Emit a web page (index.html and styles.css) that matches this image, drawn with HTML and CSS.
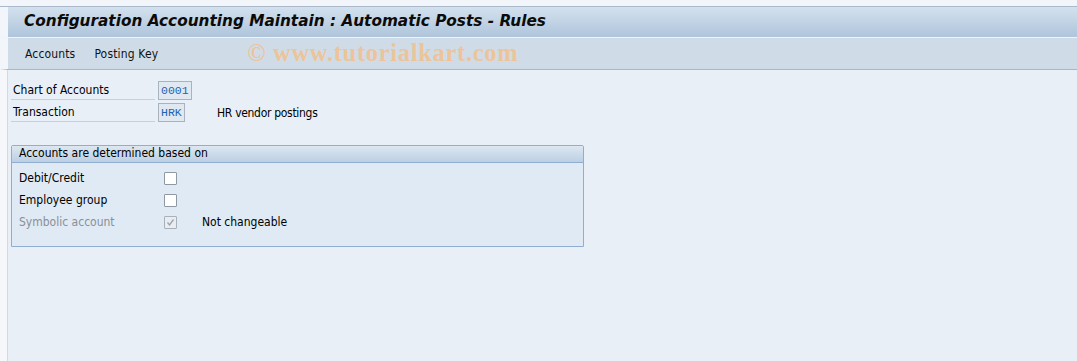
FILE: index.html
```html
<!DOCTYPE html>
<html>
<head>
<meta charset="utf-8">
<link rel="stylesheet" href="styles.css">
</head>
<body>
<div class="topstrip"></div>
<div class="titlebar"><h1 class="title">Configuration Accounting Maintain : Automatic Posts - Rules</h1></div>
<div class="menubar">
  <span class="menu-item">Accounts</span>
  <span class="menu-item">Posting Key</span>
  <span class="watermark">© www.tutorialkart.com</span>
</div>
<div class="main">
  <div class="gutter"></div>
  <div class="content">
    <div class="fields">
      <div class="row">
        <span class="label">Chart of Accounts</span>
        <span class="input w4">0001</span>
      </div>
      <div class="row">
        <span class="label">Transaction</span>
        <span class="input w3">HRK</span>
        <span class="desc">HR vendor postings</span>
      </div>
    </div>
    <div class="group">
      <div class="group-head">Accounts are determined based on</div>
      <div class="group-body">
        <div class="crow"><span class="clabel">Debit/Credit</span><span class="cbox"></span></div>
        <div class="crow"><span class="clabel">Employee group</span><span class="cbox"></span></div>
        <div class="crow"><span class="clabel disabled">Symbolic account</span><span class="cbox checked"><svg width="11" height="11" viewBox="0 0 11 11"><path d="M2.5 5.5 L4.5 8 L8.5 2.5" fill="none" stroke="#9aa3ad" stroke-width="1.3"/></svg></span><span class="cnote">Not changeable</span></div>
      </div>
    </div>
  </div>
</div>
</body>
</html>
```
FILE: styles.css
```css
html, body { margin: 0; padding: 0; }
body {
  width: 1077px;
  height: 361px;
  overflow: hidden;
  background: #e8eff7;
  font-family: Tahoma, "DejaVu Sans Condensed", "Liberation Sans", sans-serif;
  font-size: 12px;
  color: #000;
  display: flex;
  flex-direction: column;
}
.topstrip {
  height: 6px;
  background: #f2f5f9;
  border-bottom: 1px solid #a9b8ca;
}
.titlebar {
  height: 30px;
  background: linear-gradient(#d3e1ee, #afc5db);
  border-left: 8px solid #f2f5f9;
  border-bottom: 1px solid #eef3f8;
  display: flex;
  align-items: center;
  padding-left: 16px;
}
.title {
  margin: 0;
  font-family: "DejaVu Sans", Verdana, sans-serif;
  font-size: 15.3px;
  font-weight: bold;
  font-style: italic;
  color: #0b0b0b;
  position: relative;
  top: -1px;
}
.menubar {
  height: 31px;
  background: #cfdce7;
  border-left: 8px solid #f2f5f9;
  border-bottom: 1px solid #a8b6c6;
  display: flex;
  align-items: center;
  padding-left: 17px;
  gap: 19px;
}
.menu-item { font-size: 12px; color: #111; letter-spacing: 0.15px; }
.watermark {
  margin-left: 70px;
  font-family: "Liberation Serif", "DejaVu Serif", serif;
  font-size: 24.5px;
  letter-spacing: 0.7px;
  font-weight: bold;
  color: #edc49a;
  position: relative;
  top: -1px;
}
.main {
  flex: 1;
  display: flex;
}
.gutter {
  width: 7px;
  background: #f5f7fa;
  border-right: 1px solid #d3dae4;
}
.content {
  padding: 11px 0 0 3px;
}
.fields { display: flex; flex-direction: column; gap: 3px; }
.row {
  display: flex;
  align-items: center;
  height: 19px;
}
.label {
  width: 144px;
  height: 19px;
  line-height: 19px;
  padding-left: 2px;
  border-bottom: 1px solid #c7d1dc;
  box-sizing: border-box;
  margin-right: 3px;
}
.input {
  height: 19px;
  box-sizing: border-box;
  border: 1px solid #a9b3be;
  background: #e0e9f2;
  font-family: "Liberation Mono", "Courier New", monospace;
  font-size: 11.5px;
  color: #1f63b4;
  line-height: 17px;
  padding: 0 2px;
}
.w4 { width: 34px; }
.w3 { width: 27px; }
.desc { margin-left: 32px; letter-spacing: -0.3px; }
.group {
  margin-top: 23px;
  width: 573px;
  height: 102px;
  box-sizing: border-box;
  border: 1px solid #90afd0;
  border-radius: 2px 2px 0 0;
  background: #dfeaf4;
}
.group-head {
  height: 16px;
  line-height: 15px;
  background: linear-gradient(#dce7f2, #bccfe3);
  border-bottom: 1px solid #90afd0;
  padding-left: 7px;
}
.group-body { padding-top: 4px; padding-left: 7px; }
.crow {
  display: flex;
  align-items: center;
  height: 22px;
}
.clabel { width: 145px; }
.disabled { color: #8a8f96; }
.cbox {
  width: 11px;
  height: 11px;
  border: 1px solid #8f98a3;
  background: #fff;
  border-radius: 1px;
  display: flex;
  align-items: center;
  justify-content: center;
}
.cbox.checked { background: #e9edf1; border-color: #a8b0ba; }
.cnote { margin-left: 25px; }
```
